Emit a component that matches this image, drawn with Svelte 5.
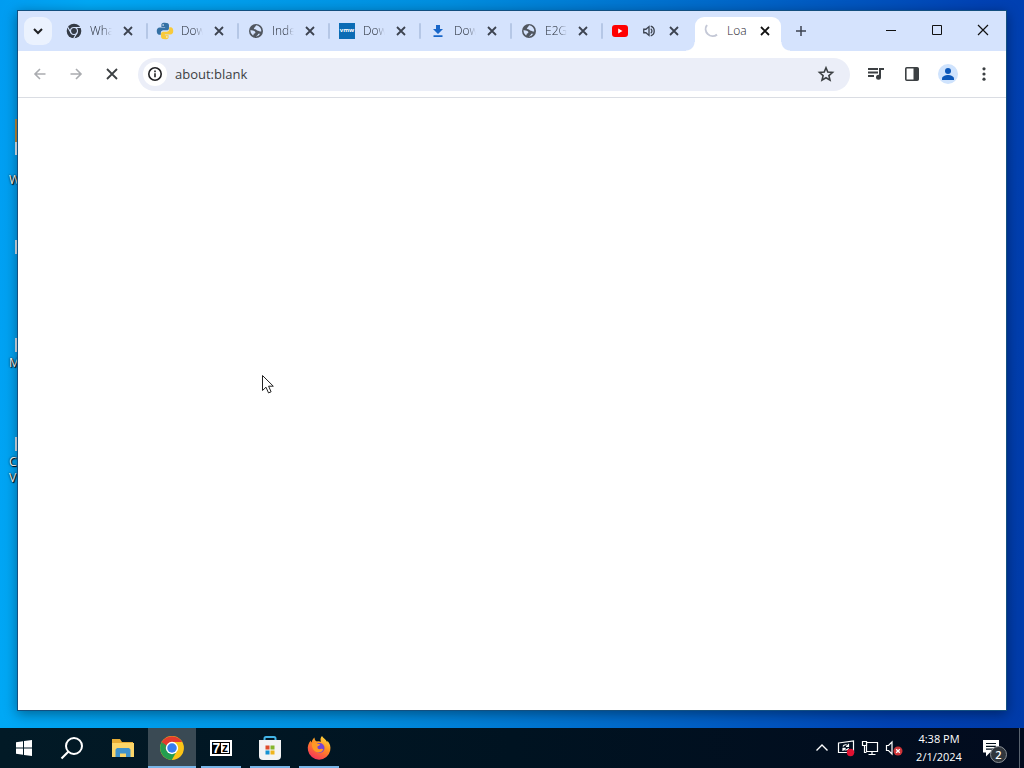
<script>
  const tabs = [
    { icon: 'chrome', title: 'What' },
    { icon: 'python', title: 'Down' },
    { icon: 'globe', title: 'Index' },
    { icon: 'vmw', title: 'Down' },
    { icon: 'download', title: 'Down' },
    { icon: 'globe', title: 'E2GO' },
    { icon: 'youtube', title: '', audio: true },
    { icon: 'spinner', title: 'Loa', active: true }
  ];
  const apps = [
    { icon: 'folder', label: 'File Explorer' },
    { icon: 'chrome', label: 'Google Chrome', open: true, active: true },
    { icon: 'seven', label: '7-Zip', open: true },
    { icon: 'store', label: 'Microsoft Store', open: true },
    { icon: 'firefox', label: 'Firefox', open: true }
  ];
  let address = $state('about:blank');
</script>

{#snippet favicon(name)}
  {#if name === 'chrome'}
    <svg width="16" height="16" viewBox="0 0 24 24">
      <circle cx="12" cy="12" r="11" fill="#343b46" />
      <g fill="none" stroke="#d5e3fd" stroke-width="1.7">
        <circle cx="12" cy="12" r="5.2" />
        <path d="M12 6.800h10.500M7.500 14.600L2.200 5.600M16.500 14.600l-5.200 9" />
      </g>
      <circle cx="12" cy="12" r="3.500" fill="#343b46" />
    </svg>
  {:else if name === 'python'}
    <svg width="18" height="18" viewBox="0 0 24 24">
      <path fill="#3471a5" d="M11.800 1C7 1 7.200 3.200 7.200 4.300v2.200h5v.8H4.800C2.500 7.300 1 9 1 12s1.300 4.900 3.400 4.900h2v-2.700c0-2 1.500-3.200 3.400-3.200h4.800c1.600 0 2.700-1.300 2.700-2.800V4.300C17.300 2 15.200 1 11.800 1z" />
      <path fill="#f8ca3a" d="M12.200 23c4.800 0 4.600-2.200 4.600-3.300v-2.200h-5v-.8h7.400c2.300 0 3.800-1.700 3.800-4.700s-1.300-4.900-3.400-4.900h-2v2.700c0 2-1.500 3.200-3.400 3.200H9.400c-1.600 0-2.700 1.300-2.700 2.800v3.900c0 2.300 2.100 3.300 5.500 3.300z" />
      <circle cx="9.500" cy="4" r="1" fill="#fff" /><circle cx="14.500" cy="20" r="1" fill="#fff" />
    </svg>
  {:else if name === 'globe'}
    <svg width="16" height="16" viewBox="0 0 16 16">
      <circle cx="8" cy="8" r="7" fill="#50565f" />
      <path fill="#d5e3fd" d="M8.300 2.300c-1.300 1-.9 2.100-2 2.500-1 .3-.2 1.500.8 1.500 1.500 0 1.300 1.400 2.900 1.400 1.300 0 1.500 1.100 3.200.9A5.500 5.500 0 0 0 8.300 2.300zM2.400 7.300c1.400-.2 2.900.2 4 .8 1.500.8 1.200 2.200-.1 2.300-1.200.1-.2 1.700-1.300 2A5.800 5.800 0 0 1 2.400 7.300zM8 13.600c.1-1.200 1.600-.9 1.900-2.200.2-.8 1.200-.7 2.300-.7A5.500 5.500 0 0 1 8 13.600z" />
    </svg>
  {:else if name === 'vmw'}
    <span class="vmw">vmw</span>
  {:else if name === 'download'}
    <svg width="16" height="16" viewBox="0 0 16 16"><path fill="#1967c9" d="M6 2h4v4h3l-5 5-5-5h3zM3.500 12.200h9V14h-9z" /></svg>
  {:else if name === 'youtube'}
    <svg width="16" height="16" viewBox="0 0 16 16"><rect y="2" width="16" height="12" rx="3" fill="#f00" /><path d="M6.200 5.500v5l4.300-2.500z" fill="#fff" /></svg>
  {:else}
    <svg width="16" height="16" viewBox="0 0 16 16"><path d="M4 2A7 7 0 0 0 14 11.600" fill="none" stroke="#c4c8d6" stroke-width="2" /></svg>
  {/if}
{/snippet}

{#snippet appicon(name)}
  {#if name === 'folder'}
    <svg width="24" height="24" viewBox="0 0 24 24">
      <path fill="#e6ac35" d="M1 3h8l2 3h11v6H1z" /><path fill="#fbd568" d="M1 7h22v14H1z" />
      <path fill="#3f92cc" d="M4.500 21v-7.500L6 12h12l1.500 1.500V21h-4.500v-3.500H9V21z" />
    </svg>
  {:else if name === 'chrome'}
    <svg width="26" height="26" viewBox="0 0 24 24">
      <circle cx="12" cy="12" r="11" fill="#fbc417" />
      <path d="M12 12L2.500 6.500A11 11 0 0 1 21.500 6.500H12z" fill="#e33b2e" />
      <path d="M2.500 6.500A11 11 0 0 0 11.800 23l4.800-8.400L12 12z" fill="#239d50" />
      <path d="M2.500 6.500L7.200 14.700 12 6.500z" fill="#e33b2e" />
      <path d="M2.500 6.500L7.300 14.800 10 12z" fill="#239d50" />
      <circle cx="12" cy="12" r="5.700" fill="#fff" /><circle cx="12" cy="12" r="4.400" fill="#377df0" />
    </svg>
  {:else if name === 'seven'}
    <span class="seven"><b>7</b><b class="zee">z</b></span>
  {:else if name === 'store'}
    <svg width="26" height="26" viewBox="0 0 26 26">
      <path d="M7.500 8V3.500q0-1.500 1.500-1.500h8q1.500 0 1.500 1.500V8" fill="none" stroke="#42b5e8" stroke-width="2" />
      <path d="M2 5h22v16q0 4-4 4H6q-4 0-4-4z" fill="#f3f3f4" />
      <path d="M8.500 10.500h4v4h-4z" fill="#df4b2b" /><path d="M13.500 10.500h4v4h-4z" fill="#84b52c" />
      <path d="M8.500 15.500h4v4h-4z" fill="#1792d3" /><path d="M13.500 15.500h4v4h-4z" fill="#efb51c" />
    </svg>
  {:else}
    <svg width="26" height="26" viewBox="0 0 26 26">
      <defs><linearGradient id="fox" x1=".8" y1="0" x2=".25" y2="1"><stop offset="0" stop-color="#ffdf3d" /><stop offset=".45" stop-color="#ff8a23" /><stop offset="1" stop-color="#f52c5e" /></linearGradient></defs>
      <path fill="url(#fox)" d="M16 1c1 2 4 3.500 5.200 6.200l.3-1.400C24 8.500 25 12 24.200 15.500A11.300 11.300 0 0 1 2 15.500C1.200 11.500 2.500 8 4.800 5.500c0 1 .3 1.500.7 2C6 5.500 7 3.500 8.500 2.500 8.500 5 9.500 6 11 6.500c1.500-.5 3-.2 4 .3C14 5 14.500 2.500 16 1z" />
      <circle cx="13.500" cy="13" r="5" fill="#7543d6" />
      <path fill="#ff9a25" d="M6 8.500c2-1.500 4-1.200 5.500.2 1 .2 2 .3 2.700.5-.2 1.400-2 1.600-2.700 2.300-.4 1.800 1 3.200 3 2.600 1.500-.5 2.500-.2 2.800.5-1.300 2.800-4 3.400-6.300 2.600C7.500 16 5.500 12.500 6 8.500z" />
    </svg>
  {/if}
{/snippet}

<div class="screen">
  <main class="desktop">
    <div class="shortcut a"><i class="pic gold"></i>W</div>
    <div class="shortcut b"><i class="pic"></i></div>
    <div class="shortcut c"><i class="pic"></i>M</div>
    <div class="shortcut d"><i class="pic"></i>C<br />V</div>

    <section class="window" aria-label="Google Chrome">
      <header class="strip">
        <button class="search-tabs" aria-label="Search tabs">
          <svg width="16" height="16" viewBox="0 0 16 16"><path d="M4 6l4 4 4-4" fill="none" stroke="currentColor" stroke-width="2" /></svg>
        </button>
        <div class="tabs">
          {#each tabs as tab}
            <div class="tab" class:active={tab.active}>
              <button class="pick" aria-label={tab.title || 'YouTube'}>
                <span class="fav">{@render favicon(tab.icon)}</span>
                {#if tab.audio}
                  <svg class="audio" width="14" height="14" viewBox="0 0 16 16"><path d="M2 6h2.500L8 3v10l-3.500-3H2z" fill="none" stroke="currentColor" stroke-width="1.500" /><path d="M10 5.500a3 3 0 0 1 0 5M10 2.500a5.800 5.800 0 0 1 0 11" fill="none" stroke="currentColor" stroke-width="1.500" /></svg>
                {:else}
                  <span class="title">{tab.title}</span>
                {/if}
              </button>
              <button class="close" aria-label="Close tab"><svg width="16" height="16" viewBox="0 0 16 16"><path d="M4 4l8 8M12 4l-8 8" fill="none" stroke="currentColor" stroke-width="1.800" /></svg></button>
            </div>
          {/each}
        </div>
        <button class="new" aria-label="New tab"><svg width="16" height="16" viewBox="0 0 16 16"><path d="M8 3v10M3 8h10" stroke="currentColor" stroke-width="1.500" /></svg></button>
        <div class="caption">
          <button aria-label="Minimize"><svg width="12" height="12" viewBox="0 0 12 12"><path d="M1 6.500h10" stroke="#111" /></svg></button>
          <button aria-label="Maximize"><svg width="12" height="12" viewBox="0 0 12 12"><path d="M1.500 1.500h9v9h-9z" fill="none" stroke="#111" /></svg></button>
          <button aria-label="Close"><svg width="12" height="12" viewBox="0 0 12 12"><path d="M1 1l10 10M11 1L1 11" stroke="#111" stroke-width="1.200" /></svg></button>
        </div>
      </header>

      <nav class="toolbar">
        <div class="group">
          <button class="dim" aria-label="Back"><svg width="16" height="16" viewBox="0 0 16 16"><path d="M13.500 8H3M8 3L3 8l5 5" fill="none" stroke="currentColor" stroke-width="1.600" /></svg></button>
          <button class="dim" aria-label="Forward"><svg width="16" height="16" viewBox="0 0 16 16"><path d="M2.500 8H13M8 3l5 5-5 5" fill="none" stroke="currentColor" stroke-width="1.600" /></svg></button>
          <button aria-label="Stop loading"><svg width="16" height="16" viewBox="0 0 16 16"><path d="M3 3l10 10M13 3L3 13" stroke="currentColor" stroke-width="1.800" /></svg></button>
        </div>
        <div class="omnibox">
          <button class="info" aria-label="Site information"><svg width="16" height="16" viewBox="0 0 16 16"><circle cx="8" cy="8" r="6.200" fill="none" stroke="currentColor" stroke-width="1.600" /><path d="M7.200 7.200h1.600v4H7.200zM7.200 4.600h1.600v1.600H7.200z" fill="currentColor" /></svg></button>
          <input type="text" bind:value={address} aria-label="Address" />
          <button class="star" aria-label="Bookmark"><svg width="18" height="18" viewBox="0 0 18 18"><path d="M9 2.800l1.800 4.300 4.700.4-3.600 3.100 1.100 4.600L9 12.800l-4 2.400 1.100-4.600-3.600-3.100 4.700-.4z" fill="none" stroke="currentColor" stroke-width="1.600" /></svg></button>
        </div>
        <div class="group">
          <button aria-label="Media controls"><svg width="18" height="18" viewBox="0 0 18 18"><path d="M1 4h10M1 7.500h10M1 11h6" stroke="currentColor" stroke-width="1.800" /><path d="M12 3h5v2h-3v7.300h-2z" fill="currentColor" /><circle cx="11.500" cy="12.300" r="2.500" fill="currentColor" /></svg></button>
          <button aria-label="Side panel"><svg width="16" height="16" viewBox="0 0 16 16"><rect x="1.800" y="1.800" width="12.400" height="12.400" rx="1" fill="none" stroke="currentColor" stroke-width="1.600" /><path d="M9.500 2h4.700v12H9.500z" fill="currentColor" /></svg></button>
          <button aria-label="Profile"><svg width="20" height="20" viewBox="0 0 20 20"><circle cx="10" cy="10" r="10" fill="#cfe3fd" /><circle cx="10" cy="7" r="3" fill="#0b57b9" /><path d="M4 16v-1.500c0-2.200 3.500-3.500 6-3.500s6 1.300 6 3.500V16z" fill="#0b57b9" /></svg></button>
          <button aria-label="Menu"><svg width="16" height="16" viewBox="0 0 16 16" fill="currentColor"><circle cx="8" cy="2.800" r="1.600" /><circle cx="8" cy="8" r="1.600" /><circle cx="8" cy="13.200" r="1.600" /></svg></button>
        </div>
      </nav>
      <div class="page"></div>
    </section>

    <svg class="pointer" width="14" height="22" viewBox="0 0 14 22"><path d="M1.500 1.500v15l3.500-3.300 2.500 5.700 2.600-1.100-2.500-5.600h4.700z" fill="#fff" stroke="#222" /></svg>
  </main>

  <footer class="taskbar">
    <button aria-label="Start"><svg width="18" height="18" viewBox="0 0 18 18" fill="#fff"><path d="M1 3.200l7-1v6.300H1zM9 2.100L17 1v7.500H9zM1 9.500h7v6.300l-7-1zM9 9.500h8V17l-8-1.100z" /></svg></button>
    <button aria-label="Search"><svg width="24" height="24" viewBox="0 0 24 24"><circle cx="14" cy="10" r="8" fill="none" stroke="#fff" stroke-width="2" /><path d="M8.500 15.500L1.500 22.500" stroke="#fff" stroke-width="2.200" /></svg></button>
    <div class="apps">
      {#each apps as app}
        <button class:open={app.open} class:active={app.active} aria-label={app.label}>{@render appicon(app.icon)}</button>
      {/each}
    </div>
    <div class="tray">
      <button aria-label="Hidden icons"><svg width="16" height="16" viewBox="0 0 16 16"><path d="M2.500 10.500L8 5l5.500 5.500" fill="none" stroke="#fff" stroke-width="1.400" /></svg></button>
      <button aria-label="Updates"><svg width="18" height="18" viewBox="0 0 18 18"><path d="M1.500 4l15-2v11.500H1.500z" fill="none" stroke="#fff" stroke-width="1.200" /><path d="M6 7.500C7 5.300 10 5.200 11 7M11.500 4.800v2.700H9M11.500 9C10.500 11.500 7.500 11.500 6.500 9.700M6 12V9.300h2.700" fill="none" stroke="#fff" stroke-width="1.200" /><circle cx="13.500" cy="13.500" r="3.700" fill="#e01131" /></svg></button>
      <button aria-label="Network"><svg width="18" height="18" viewBox="0 0 18 18"><path d="M5.500 3.500h11v9h-11zM11 12.500v3M7.500 15.500h7M3.500 7v6.500h2" fill="none" stroke="#fff" stroke-width="1.200" /><path d="M1.500 2.500h4v4h-4z" fill="#02101d" stroke="#fff" stroke-width="1.200" /></svg></button>
      <button aria-label="Volume"><svg width="18" height="18" viewBox="0 0 18 18"><path d="M1.500 6.500h2L7 3v12l-3.500-3.500h-2z" fill="none" stroke="#fff" stroke-width="1.200" /><circle cx="13" cy="12" r="4.500" fill="#cf3438" /><path d="M11.200 10.200l3.600 3.600M14.800 10.200l-3.600 3.600" stroke="#fff" stroke-width="1.300" /></svg></button>
    </div>
    <button class="clock"><span>4:38 PM</span><span>2/1/2024</span></button>
    <button class="notes" aria-label="Notifications, 2 new">
      <svg width="18" height="18" viewBox="0 0 18 18"><path d="M1 1h16v12.500h-9L4 17.500v-4H1z" fill="#fff" /><path d="M4 4.500h10M4 7.300h10M4 10.100h7" stroke="#02101d" stroke-width="1.200" /></svg>
      <span class="badge">2</span>
    </button>
    <button class="peek" aria-label="Show desktop"></button>
  </footer>
</div>

<style>
  :global(body) { margin: 0; }
  * { box-sizing: border-box; }
  button { display: flex; align-items: center; justify-content: center; padding: 0; border: 0; background: none; font: inherit; color: inherit; flex: none; }
  svg { display: block; flex: none; }
  .screen { min-height: 100vh; display: grid; grid-template-rows: 1fr 40px; font-family: "Open Sans", "Noto Sans", sans-serif; }
  .desktop { position: relative; display: flex; padding: 10px 17px 17px; background: linear-gradient(97deg, #009cf1 0%, #00a8f5 8%, #008fe0 40%, #0064c8 68%, #0042b5 88%, #003ba9 100%); overflow: hidden; }
  .window { position: relative; flex: 1; min-width: 0; display: flex; flex-direction: column; border: 1px solid #124f80; background: #fff; box-shadow: 0 3px 12px rgba(0, 0, 0, .4); }
  .strip { display: flex; height: 40px; background: #d5e3fd; }
  .search-tabs { width: 28px; height: 28px; margin: 6px 4px 0 6px; border-radius: 9px; background: #ebf2fe; color: #202124; }
  .tabs { display: flex; }
  .tab { position: relative; display: flex; align-items: center; width: 91px; padding: 0 11px 0 9px; color: #3c4350; }
  .tab:not(.active):not(:nth-last-child(2))::after { content: ""; position: absolute; right: -1px; top: 12px; width: 2px; height: 16px; background: #b5c7e6; border-radius: 1px; }
  .pick { flex: 1; min-width: 0; height: 34px; justify-content: flex-start; gap: 7px; }
  .fav { display: flex; align-items: center; justify-content: center; width: 18px; flex: none; }
  .title { flex: none; width: 22px; overflow: hidden; white-space: nowrap; text-align: left; font-size: 12px; font-weight: 300; line-height: 16px; color: #1f2530; mask-image: linear-gradient(90deg, #000 60%, transparent); }
  .audio { margin-left: 6px; color: #3c4350; }
  .close { width: 16px; height: 34px; }
  .active .close { color: #111; }
  .active .title { mask-image: none; }
  .tab.active::before { content: ""; position: absolute; inset: 6px 3px 0 2px; background: #fff; border-radius: 9px 9px 0 0; }
  .tab.active::after { content: ""; position: absolute; left: -7px; right: -6px; bottom: 0; height: 9px; background: radial-gradient(circle at 0 0, transparent 8px, #fff 9px) left / 9px 9px no-repeat, radial-gradient(circle at 100% 0, transparent 8px, #fff 9px) right / 9px 9px no-repeat; }
  .active > button { position: relative; z-index: 1; }
  .new { width: 34px; color: #3c4350; }
  .caption { display: flex; margin-left: auto; }
  .caption button { width: 46px; height: 38px; }
  .toolbar { display: flex; align-items: center; gap: 8px; height: 47px; padding: 0 4px; border-bottom: 1px solid #dadde3; color: #3c4043; }
  .group { display: flex; }
  .group button { width: 36px; height: 32px; }
  .group .dim { color: #aaacb0; }
  .omnibox { flex: 1; min-width: 0; display: flex; align-items: center; height: 33px; padding: 0 5px; border-radius: 17px; background: #ebeef8; }
  .info { width: 24px; height: 24px; border-radius: 50%; background: #fff; color: #202124; }
  .omnibox input { flex: 1; min-width: 0; height: 24px; padding: 0 8px; border: 0; outline: 0; background: none; font: 400 13px/20px "Open Sans", "Noto Sans", sans-serif; color: #3c4043; }
  .star { width: 38px; height: 24px; }
  .page { flex: 1; }
  .pointer { position: absolute; left: 261px; top: 374px; }
  .shortcut { position: absolute; left: 9px; width: 40px; color: #fff; font-size: 12px; line-height: 16px; text-shadow: 1px 1px 1px #000, 0 0 2px #000; }
  .pic { display: block; height: 14px; margin: 0 0 16px 6px; background: #d8e4ef; }
  .gold { height: 36px; background: linear-gradient(#b98b3b 65%, #e4edf4 65%); }
  .a { top: 119px; }
  .a .gold { margin-bottom: 17px; }
  .b { top: 240px; }
  .c { top: 338px; }
  .c .pic { margin-bottom: 3px; }
  .d { top: 437px; }
  .d .pic { margin-bottom: 3px; }
  .taskbar { display: flex; background: linear-gradient(90deg, #021a26, #001321 50%, #020b1e); color: #fff; }
  .taskbar > button { width: 48px; }
  .apps { display: flex; gap: 1px; margin-left: 3px; }
  .apps button { position: relative; width: 48px; }
  .apps .open::after { content: ""; position: absolute; left: 4px; right: 4px; bottom: 0; height: 2px; background: #78b5e8; }
  .apps .active { background: #3a4a54; }
  .apps .active::after { left: 0; right: 0; }
  .tray { display: flex; margin-left: auto; }
  .tray button { width: 24px; }
  .taskbar .clock { flex-direction: column; width: 66px; font-size: 11px; line-height: 18px; }
  .taskbar .notes { position: relative; width: 47px; padding-right: 9px; }
  .badge { position: absolute; left: 18px; top: 18px; width: 17px; height: 17px; border: 1px solid #8b9096; border-radius: 50%; background: #30363d; font-size: 11px; font-weight: 600; line-height: 15px; text-align: center; }
  .taskbar .peek { width: 5px; border-left: 1px solid #59636f; }
  .vmw { width: 16px; height: 16px; background: #0b6cb5; color: #fff; font-size: 6px; font-weight: 700; line-height: 15px; text-align: center; }
  .seven { display: flex; align-items: stretch; width: 22px; height: 16px; border: 2px solid #fff; background: #000; color: #fff; font: 700 14px/12px "Liberation Sans", sans-serif; }
  .seven b { width: 9px; text-align: center; }
  .seven .zee { background: #fff; border: solid #000; border-width: 1px 1px 1px 0; color: #000; font-size: 12px; line-height: 10px; }
</style>
